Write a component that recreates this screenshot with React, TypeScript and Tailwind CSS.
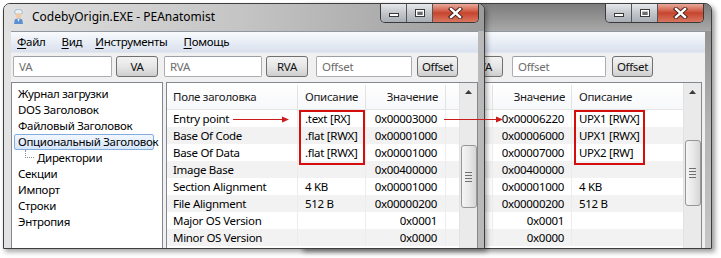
import React from "react";

const ROWS_L: [string, string, string][] = [
  ["Entry point", ".text [RX]", "0x00003000"],
  ["Base Of Code", ".flat [RWX]", "0x00001000"],
  ["Base Of Data", ".flat [RWX]", "0x00001000"],
  ["Image Base", "", "0x00400000"],
  ["Section Alignment", "4 KB", "0x00001000"],
  ["File Alignment", "512 B", "0x00000200"],
  ["Major OS Version", "", "0x0001"],
  ["Minor OS Version", "", "0x0000"],
];

const ROWS_R: [string, string][] = [
  ["0x00006220", "UPX1 [RWX]"],
  ["0x00006000", "UPX1 [RWX]"],
  ["0x00007000", "UPX2 [RW]"],
  ["0x00400000", ""],
  ["0x00001000", "4 KB"],
  ["0x00000200", "512 B"],
  ["0x0001", ""],
  ["0x0000", ""],
];

const TREE = [
  "Журнал загрузки",
  "DOS Заголовок",
  "Файловый Заголовок",
  "Опциональный Заголовок",
  "Директории",
  "Секции",
  "Импорт",
  "Строки",
  "Энтропия",
];

function AppIcon() {
  return (
    <svg width="11" height="16" viewBox="0 0 11 16">
      <ellipse cx="5.5" cy="3" rx="4" ry="2.6" fill="#e8f0f8" stroke="#8aa6c4" strokeWidth="0.7" />
      <circle cx="5.5" cy="6.5" r="2.6" fill="#f1c9a5" />
      <path d="M1 15 L1.8 10.5 Q5.5 8.5 9.2 10.5 L10 15 Z" fill="#5b8fd0" />
      <path d="M4.5 10 L5.5 13 L6.5 10 Z" fill="#ffffff" />
    </svg>
  );
}

function TitleButtons() {
  return (
    <div className="flex h-[19px] rounded-b-[5px] border border-t-0 border-[#3a3a3a] overflow-hidden">
      <div className="w-[26px] bg-gradient-to-b from-[#e6e8eb] via-[#c3c7cc] to-[#a9aeb5] border-r border-[#555] flex items-center justify-center">
        <svg width="12" height="10" viewBox="0 0 12 10">
          <rect x="1.5" y="5.5" width="9" height="3" fill="#fff" stroke="#3a3a3a" strokeWidth="1" />
        </svg>
      </div>
      <div className="w-[26px] bg-gradient-to-b from-[#e6e8eb] via-[#c3c7cc] to-[#a9aeb5] border-r border-[#555] flex items-center justify-center">
        <svg width="12" height="10" viewBox="0 0 12 10">
          <rect x="1.5" y="1.5" width="9" height="7" fill="none" stroke="#3a3a3a" strokeWidth="1" />
          <rect x="2.5" y="2.5" width="7" height="5" fill="none" stroke="#fff" strokeWidth="1" />
          <rect x="3.5" y="4" width="5" height="3" fill="#6b6b6b" />
        </svg>
      </div>
      <div className="w-[45px] bg-gradient-to-b from-[#e9a99b] via-[#c7442e] to-[#d9765f] flex items-center justify-center">
        <svg width="15" height="12" viewBox="0 0 15 12">
          <path d="M3 2 L12 10 M12 2 L3 10" stroke="#3b1a14" strokeWidth="4.2" strokeLinecap="square" />
          <path d="M3 2 L12 10 M12 2 L3 10" stroke="#ffffff" strokeWidth="2.4" strokeLinecap="square" />
        </svg>
      </div>
    </div>
  );
}

function MenuBar({ show }: { show: boolean }) {
  return (
    <div className="h-[21px] flex items-center bg-gradient-to-b from-[#f8fafd] to-[#d9e1ee] border-b border-[#e3e8f0] whitespace-nowrap">
      {show && (
        <>
          <span className="ml-[6px]">
            <span className="underline underline-offset-2">Ф</span>айл
          </span>
          <span className="ml-[16px]">
            <span className="underline underline-offset-2">В</span>ид
          </span>
          <span className="ml-[13px]">
            <span className="underline underline-offset-2">И</span>нструменты
          </span>
          <span className="ml-[16px]">
            <span className="underline underline-offset-2">П</span>омощь
          </span>
        </>
      )}
    </div>
  );
}

function Input({ w, text }: { w: string; text: string }) {
  return (
    <div className={`${w} h-[21px] bg-white border border-[#abadb3] border-t-[#9aa0a6] rounded-[2px] flex items-center pl-[5px] text-[#6d6d6d]`}>
      {text}
    </div>
  );
}

function Btn({ w, text }: { w: string; text: string }) {
  return (
    <div className={`${w} h-[21px] rounded-[3px] border border-[#707070] bg-gradient-to-b from-[#f3f3f3] via-[#e6e6e6] to-[#cfcfcf] flex items-center justify-center text-[#111]`}>
      {text}
    </div>
  );
}

function Scrollbar({ gap, h }: { gap: string; h: string }) {
  return (
    <div className="w-[18px] h-full bg-[#eaeaea] border-l border-[#e2e2e2] flex flex-col items-center">
      <div className="h-[17px] w-full flex items-center justify-center">
        <svg width="7" height="4" viewBox="0 0 7 4">
          <path d="M0 4 L3.5 0 L7 4 Z" fill="#3c3c3c" />
        </svg>
      </div>
      <div className={gap} />
      <div className={`${h} w-[16px] rounded-[3px] border border-[#979797] bg-gradient-to-r from-[#f5f5f5] via-[#e8e8e8] to-[#d6d6d6] flex flex-col items-center justify-center gap-[2px]`}>
        <div className="w-[7px] h-[1px] bg-[#707070]" />
        <div className="w-[7px] h-[1px] bg-[#707070]" />
        <div className="w-[7px] h-[1px] bg-[#707070]" />
        <div className="w-[7px] h-[1px] bg-[#707070]" />
      </div>
    </div>
  );
}

function LeftWindow() {
  return (
    <div className="absolute left-[3px] top-[3px] w-[482px] h-[246px] border border-[#3e3e3e] rounded-t-[7px] bg-gradient-to-r from-[#e2e2e2] via-[#cfcfcf] to-[#b9b9b9] shadow-[2px_3px_5px_rgba(0,0,0,0.35)] flex flex-col overflow-hidden">
      <div className="h-[27px] flex items-start bg-gradient-to-r from-[#e0e0e0] via-[#c4c4c4] to-[#9c9c9c] shrink-0">
        <div className="pl-[9px] pt-[5px]">
          <AppIcon />
        </div>
        <div className="pl-[8px] pt-[7px] text-black whitespace-nowrap text-[12px] tracking-normal">CodebyOrigin.EXE - PEAnatomist</div>
        <div className="flex-1" />
        <div className="pr-[5px]">
          <TitleButtons />
        </div>
      </div>
      <div className="flex-1 ml-[7px] mr-[6px] bg-[#f0f0f0] border-t border-[#8f97a3] flex flex-col">
        <MenuBar show />
        <div className="h-[29px] flex items-start pt-[3px] pl-[2px]">
          <Input w="w-[99px]" text="VA" />
          <div className="w-[4px]" />
          <Btn w="w-[42px]" text="VA" />
          <div className="w-[6px]" />
          <Input w="w-[98px]" text="RVA" />
          <div className="w-[4px]" />
          <Btn w="w-[42px]" text="RVA" />
          <div className="w-[8px]" />
          <Input w="w-[96px]" text="Offset" />
          <div className="w-[5px]" />
          <Btn w="w-[41px]" text="Offset" />
        </div>
        <div className="flex-1 flex gap-[3px]">
          <div className="w-[152px] h-full bg-white border border-[#828790] border-b-0 pt-[3px]">
            {TREE.map((t, i) =>
              i === 4 ? (
                <div key={t} className="h-[16px] flex items-start pl-[13px] whitespace-nowrap">
                  <div className="w-[9px] h-[8px] border-l border-b border-dotted border-[#8a8a8a] mr-[3px]" />
                  <span className="leading-[16px]">{t}</span>
                </div>
              ) : i === 3 ? (
                <div key={t} className="h-[16px] ml-[2px] w-[140px] flex items-center pl-[3px] whitespace-nowrap rounded-[2px] border border-[#84acdd] bg-gradient-to-b from-[#f2f7fe] to-[#d5e6fb]">
                  {t}
                </div>
              ) : (
                <div key={t} className="h-[16px] flex items-center pl-[6px] whitespace-nowrap">
                  {t}
                </div>
              )
            )}
          </div>
          <div className="flex-1 h-full bg-white border border-[#828790] border-b-0 flex">
            <div className="flex-1 flex flex-col">
              <div className="h-[27px] flex items-center pt-[2px] border-b border-[#e5e5e5] bg-gradient-to-b from-white to-[#f7f8fa] text-[#1a1a1a] whitespace-nowrap">
                <div className="w-[131px] pl-[6px] border-r border-[#e3e3e3] h-full flex items-center">Поле заголовка</div>
                <div className="w-[68px] pl-[7px] border-r border-[#e3e3e3] h-full flex items-center">Описание</div>
                <div className="w-[80px] pr-[7px] border-r border-[#e3e3e3] h-full flex items-center justify-end">Значение</div>
              </div>
              {ROWS_L.map((r, i) => (
                <div key={r[0]} className={`h-[17px] flex whitespace-nowrap ${i % 2 ? "bg-[#f2f2f2]" : "bg-white"}`}>
                  <div className="w-[131px] pl-[6px] border-r border-[#ececec] h-full flex items-center">{r[0]}</div>
                  <div className="w-[68px] pl-[7px] border-r border-[#ececec] h-full flex items-center">{r[1]}</div>
                  <div className="w-[80px] pr-[8px] border-r border-[#ececec] h-full flex items-center justify-end">{r[2]}</div>
                </div>
              ))}
            </div>
            <Scrollbar gap="h-[45px]" h="h-[63px]" />
          </div>
        </div>
      </div>
    </div>
  );
}

function RightWindow() {
  return (
    <div className="absolute left-[300px] top-[3px] w-[412px] h-[246px] border border-[#3e3e3e] rounded-t-[7px] bg-gradient-to-b from-[#8a8a8a] via-[#b4b4b4] to-[#c6c6c6] shadow-[3px_3px_5px_rgba(0,0,0,0.4)] flex flex-col overflow-hidden">
      <div className="h-[27px] flex items-start bg-gradient-to-b from-[#7c7c7c] to-[#a9a9a9] shrink-0">
        <div className="flex-1" />
        <div className="pr-[7px]">
          <TitleButtons />
        </div>
      </div>
      <div className="flex-1 ml-[7px] mr-[6px] bg-[#f0f0f0] border-t border-[#8f97a3] flex flex-col">
        <MenuBar show={false} />
        <div className="h-[29px] flex items-start pt-[3px]">
          <div className="w-[153px]" />
          <Btn w="w-[42px]" text="RVA" />
          <div className="w-[9px]" />
          <Input w="w-[94px]" text="Offset" />
          <div className="w-[6px]" />
          <Btn w="w-[41px]" text="Offset" />
        </div>
        <div className="flex-1 flex pr-[3px]">
          <div className="w-[111px]" />
          <div className="flex-1 h-full bg-white border border-[#828790] border-b-0 flex">
            <div className="flex-1 flex flex-col">
              <div className="h-[27px] flex items-center pt-[2px] border-b border-[#e5e5e5] bg-gradient-to-b from-white to-[#f7f8fa] text-[#1a1a1a] whitespace-nowrap">
                <div className="w-[73px] pl-[6px] border-r border-[#e3e3e3] h-full flex items-center" />
                <div className="w-[79px] pr-[6px] border-r border-[#e3e3e3] h-full flex items-center justify-end">Значение</div>
                <div className="flex-1 pl-[7px] h-full flex items-center">Описание</div>
              </div>
              {ROWS_R.map((r, i) => (
                <div key={r[0] + i} className={`h-[17px] flex whitespace-nowrap ${i % 2 ? "bg-[#f2f2f2]" : "bg-white"}`}>
                  <div className="w-[73px] border-r border-[#ececec] h-full" />
                  <div className="w-[79px] pr-[7px] border-r border-[#ececec] h-full flex items-center justify-end">{r[0]}</div>
                  <div className="flex-1 pl-[7px] h-full flex items-center">{r[1]}</div>
                </div>
              ))}
            </div>
            <Scrollbar gap="h-[40px]" h="h-[66px]" />
          </div>
        </div>
      </div>
    </div>
  );
}

export default function App() {
  return (
    <div className="relative w-[721px] h-[258px] bg-white overflow-hidden font-['Noto_Sans',sans-serif] text-[11.5px] tracking-[-0.3px] text-black leading-none">
      <RightWindow />
      <LeftWindow />
      <div className="absolute left-[299px] top-[110px] w-[66px] h-[55px] border-2 border-[#d40d0d]" />
      <div className="absolute left-[574px] top-[110px] w-[71px] h-[55px] border-2 border-[#d40d0d]" />
      <svg className="absolute left-0 top-0 pointer-events-none" width="721" height="258" viewBox="0 0 721 258">
        <line x1="233" y1="119.5" x2="283" y2="119.5" stroke="#cc1b1b" strokeWidth="1" />
        <path d="M282 116.5 L289 119.5 L282 122.5 Z" fill="#cc1b1b" />
        <line x1="444" y1="119.5" x2="497" y2="119.5" stroke="#cc1b1b" strokeWidth="1" />
        <path d="M496 116.5 L503 119.5 L496 122.5 Z" fill="#cc1b1b" />
      </svg>
    </div>
  );
}
